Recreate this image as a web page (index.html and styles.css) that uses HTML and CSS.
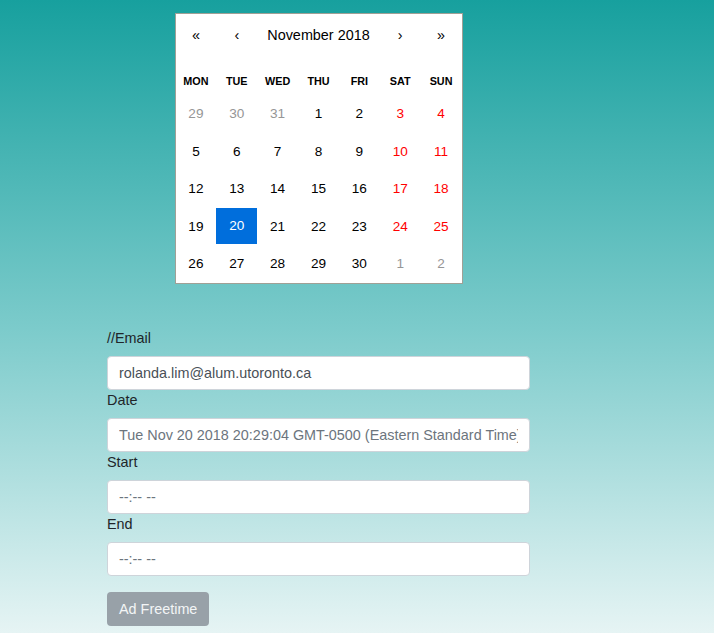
FILE: index.html
```html
<!DOCTYPE html>
<html>
<head>
<meta charset="utf-8">
<link rel="stylesheet" href="styles.css">
</head>
<body>
<div class="page">
  <div class="calendar">
    <div class="cal-nav">
      <button class="nav-btn">«</button>
      <button class="nav-btn">‹</button>
      <span class="nav-label">November 2018</span>
      <button class="nav-btn">›</button>
      <button class="nav-btn">»</button>
    </div>
    <div class="weekdays">
      <span>MON</span><span>TUE</span><span>WED</span><span>THU</span><span>FRI</span><span>SAT</span><span>SUN</span>
    </div>
    <div class="days">
      <span class="tile other">29</span><span class="tile other">30</span><span class="tile other">31</span><span class="tile">1</span><span class="tile">2</span><span class="tile weekend">3</span><span class="tile weekend">4</span>
      <span class="tile">5</span><span class="tile">6</span><span class="tile">7</span><span class="tile">8</span><span class="tile">9</span><span class="tile weekend">10</span><span class="tile weekend">11</span>
      <span class="tile">12</span><span class="tile">13</span><span class="tile">14</span><span class="tile">15</span><span class="tile">16</span><span class="tile weekend">17</span><span class="tile weekend">18</span>
      <span class="tile">19</span><span class="tile active">20</span><span class="tile">21</span><span class="tile">22</span><span class="tile">23</span><span class="tile weekend">24</span><span class="tile weekend">25</span>
      <span class="tile">26</span><span class="tile">27</span><span class="tile">28</span><span class="tile">29</span><span class="tile">30</span><span class="tile other">1</span><span class="tile other">2</span>
    </div>
  </div>

  <form class="form">
    <label class="label">//Email</label>
    <input class="field" type="text" value="rolanda.lim@alum.utoronto.ca">
    <label class="label">Date</label>
    <input class="field field-muted" type="text" value="Tue Nov 20 2018 20:29:04 GMT-0500 (Eastern Standard Time)">
    <label class="label">Start</label>
    <input class="field field-time" type="text" value="--:-- --">
    <label class="label">End</label>
    <input class="field field-time" type="text" value="--:-- --">
    <button class="submit" type="button">Ad Freetime</button>
  </form>
</div>
</body>
</html>
```
FILE: styles.css
```css
html, body {
  margin: 0;
  padding: 0;
}
body {
  min-height: 633px;
  background: linear-gradient(to bottom, #17a09e 0%, #7ccbcb 52%, #e6f4f4 100%);
  font-family: "Liberation Sans", Arial, Helvetica, sans-serif;
  font-size: 14.4px;
  color: #212529;
}
.page {
  width: 423px;
  padding: 13px 0 0 107px;
  display: flex;
  flex-direction: column;
}
.calendar {
  align-self: center;
  width: 286px;
  background: #fff;
  border: 1px solid #a0a096;
  font-family: "Liberation Sans", Arial, Helvetica, sans-serif;
}
.cal-nav {
  display: grid;
  grid-template-columns: repeat(7, 1fr);
  height: 42px;
  align-items: center;
  margin-bottom: 12px;
}
.nav-btn {
  border: 0;
  background: none;
  padding: 0;
  font-family: inherit;
  font-size: 14.4px;
  color: #000;
  height: 42px;
}
.nav-label {
  grid-column: span 3;
  text-align: center;
  font-size: 14.4px;
  color: #000;
}
.weekdays {
  display: grid;
  grid-template-columns: repeat(7, 1fr);
  height: 26px;
  align-items: center;
  text-align: center;
  font-weight: bold;
  font-size: 10.8px;
  color: #000;
  margin-bottom: 1px;
}
.days {
  display: grid;
  grid-template-columns: repeat(7, 1fr);
  grid-auto-rows: 37.5px;
}
.tile {
  display: flex;
  align-items: center;
  justify-content: center;
  font-size: 13.6px;
  color: #000;
}
.tile.other {
  color: #969696;
}
.tile.weekend {
  color: #ff0000;
}
.tile.active {
  background: #006edc;
  color: #fff;
  margin: 0 0 1px 0;
}
.form {
  display: flex;
  flex-direction: column;
  margin-top: 44px;
}
.label {
  line-height: 21px;
  margin-bottom: 7px;
  color: #212529;
}
.field {
  box-sizing: border-box;
  height: 34px;
  width: 100%;
  padding: 0 11px;
  border: 1px solid #ced4da;
  border-radius: 4px;
  background: #fff;
  font-family: inherit;
  font-size: 14.4px;
  color: #495057;
  outline: none;
}
.field-muted {
  color: #6c757d;
}
.field-time {
  color: #6c757d;
}
.submit {
  align-self: flex-start;
  margin-top: 16px;
  height: 34px;
  padding: 0 12px;
  border: 0;
  border-radius: 4px;
  background: #98a1a8;
  color: #f3f5f6;
  font-family: inherit;
  font-size: 14.4px;
}
```
